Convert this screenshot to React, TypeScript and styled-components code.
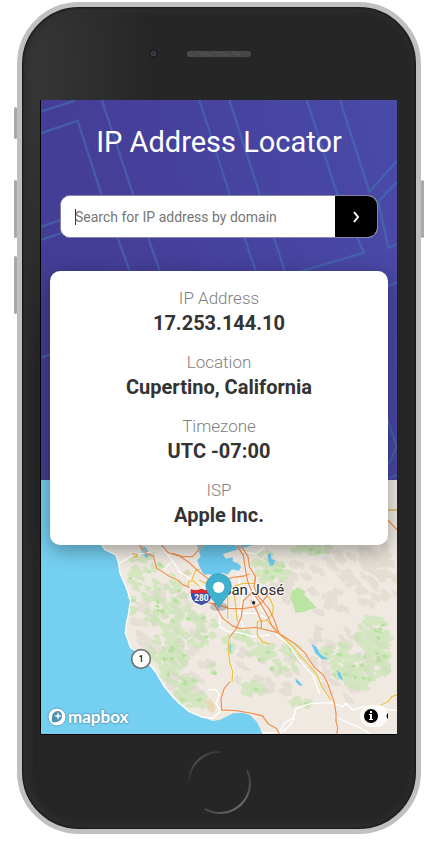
import React, { useState } from "react";
import styled, { createGlobalStyle } from "styled-components";

const GlobalStyle = createGlobalStyle`
  *, *::before, *::after { box-sizing: border-box; }
  body { margin: 0; background: #fff; font-family: Roboto, "Noto Sans", sans-serif; }
  h1, dl, dt, dd { margin: 0; }
`;

const Page = styled.div`
  padding: 2px 17px 10px;
`;

const Phone = styled.div`
  position: relative;
  border: 5px solid #c1c0c1;
  border-radius: 62px;
  background: radial-gradient(130px 300px at 0 60px, #383838, #262626);
  box-shadow: inset 0 0 2px 1px #151515, inset 2px 0 8px 4px #303030;
`;

const SideButton = styled.span<{ $side: "left" | "right"; $top: number; $height: number }>`
  position: absolute;
  top: ${(p) => p.$top}px;
  ${(p) => p.$side}: -8px;
  width: 3px;
  height: ${(p) => p.$height}px;
  border-radius: 2px;
  background: #a9a9a9;
`;

const TopBezel = styled.div`
  display: grid;
  grid-template-columns: 1fr 64px 1fr;
  align-items: center;
  height: 93px;
`;

const Camera = styled.span`
  justify-self: end;
  width: 9px;
  height: 9px;
  margin-right: 29px;
  border-radius: 50%;
  border: 2px solid #1f1d28;
  background: radial-gradient(circle, #2a2932 20%, #55555f 80%);
`;

const Speaker = styled.span`
  height: 6px;
  border-radius: 3px;
  background: repeating-linear-gradient(45deg, #505050 0 1px, #434343 1px 2px);
`;

const Screen = styled.main`
  margin: 0 19px 0 18px;
  border-left: 1px solid #000;
  border-bottom: 1px solid #000;
`;

const BottomBezel = styled.div`
  display: flex;
  justify-content: center;
  align-items: center;
  height: 94px;
`;

const HomeButton = styled.svg`
  display: block;
  width: 64px;
  height: 64px;
`;

const Hero = styled.header`
  position: relative;
  z-index: 1;
  height: 380px;
  padding: 24px 9px 0;
  background: linear-gradient(75deg, #433c92 0%, #46409c 45%, #4a4aa9 100%);
`;

const Backdrop = styled.svg`
  position: absolute;
  inset: 0;
  width: 100%;
  height: 100%;
`;

const Title = styled.h1`
  position: relative;
  color: #fff;
  font-size: 29px;
  font-weight: 400;
  line-height: 36px;
  text-align: center;
`;

const SearchForm = styled.form`
  position: relative;
  display: flex;
  height: 43px;
  margin: 35px 10px 33px;
  border: 1px solid #8885a8;
  border-radius: 10px;
  overflow: hidden;
  background: #fff;
`;

const SearchInput = styled.input`
  flex: 1;
  min-width: 0;
  padding: 0 14px;
  border: 0;
  outline: 0;
  background: #fff;
  color: #333;
  font: 400 14px Roboto, sans-serif;
  &::placeholder { color: #757575; opacity: 1; }
  &:placeholder-shown {
    caret-color: transparent;
    background: linear-gradient(#333, #333) no-repeat 14px 50% / 1px 16px, #fff;
  }
`;

const SearchButton = styled.button`
  display: flex;
  align-items: center;
  justify-content: center;
  width: 42px;
  padding: 0;
  border: 0;
  background: #000;
  color: #fff;
  cursor: pointer;
`;

const Card = styled.dl`
  position: relative;
  display: flex;
  flex-direction: column;
  gap: 14px;
  padding: 15px 16px 17px;
  border-radius: 10px;
  background: #fff;
  box-shadow: 0 5px 20px rgba(0, 0, 0, 0.35);
  text-align: center;
`;

const Label = styled.dt`
  color: #808080;
  font-size: 17px;
  font-weight: 300;
  line-height: 24px;
`;

const Value = styled.dd`
  color: #333;
  font-size: 20px;
  font-weight: 700;
  line-height: 26px;
`;

const MapPanel = styled.section`
  position: relative;
  height: 254px;
  overflow: hidden;
  background: #75cff0;
`;

const MapLogo = styled.a`
  position: absolute;
  left: 6px;
  bottom: 7px;
  display: flex;
  align-items: center;
  gap: 1px;
  color: #fff;
  font: 700 17px/20px Lato, sans-serif;
  text-decoration: none;
  text-shadow: 1px 0 1px #5fa6c2, -1px 0 1px #5fa6c2, 0 1px 1px #5fa6c2, 0 -1px 1px #5fa6c2;
`;

const Attribution = styled.button`
  position: absolute;
  right: 9px;
  bottom: 7px;
  width: 28px;
  height: 22px;
  padding: 0;
  border: 0;
  border-radius: 11px;
  background: rgba(255, 255, 255, 0.75);
  cursor: pointer;
  svg { display: block; }
`;

const details = [
  { label: "IP Address", value: "17.253.144.10" },
  { label: "Location", value: "Cupertino, California" },
  { label: "Timezone", value: "UTC -07:00" },
  { label: "ISP", value: "Apple Inc." },
];

const streets = [
  "M123 65L225 32",
  "M123 130L233 92L305 315L390 545",
  "M305 30L400 315L480 545",
  "M598 30L690 315L768 545",
  "M688 30L780 315L855 545",
  "M920 30L1008 300L1092 488L900 545",
  "M1020 30L1108 305L1191 212",
  "M1191 275L1135 335L1165 473L1191 463",
  "M123 410L300 350",
  "M123 450L300 390",
  "M1150 592L1191 577",
  "M123 803L170 787",
  "M1160 980L1190 1070L1165 1125",
  "M1160 1167L1191 1155",
];

/* Clusters of vegetation and relief: centre, radii, number of patches. */
type Cluster = [number, number, number, number, number];

const woods: Cluster[] = [
  [330, 75, 50, 35, 16], [300, 115, 20, 35, 8], [390, 160, 75, 55, 24],
  [420, 225, 90, 45, 34], [480, 270, 65, 50, 24], [385, 320, 50, 45, 32],
  [410, 365, 45, 35, 26], [440, 435, 35, 40, 28], [470, 480, 35, 24, 18],
  [390, 400, 25, 25, 8], [620, 310, 60, 38, 18], [690, 345, 60, 30, 20],
  [770, 330, 35, 25, 8], [655, 450, 35, 22, 18], [790, 487, 28, 12, 8],
  [530, 388, 12, 16, 3], [900, 335, 50, 25, 18],
  [940, 385, 60, 45, 42], [1010, 285, 50, 55, 46], [1020, 350, 40, 65, 44],
  [970, 425, 45, 22, 20], [690, 75, 35, 50, 28], [735, 95, 22, 22, 12],
  [830, 27, 60, 14, 16], [288, 195, 3, 25, 3], [745, 390, 45, 15, 6],
];

const hills: Cluster[] = [
  [400, 250, 110, 110, 34], [450, 390, 80, 90, 24], [850, 120, 170, 100, 50],
  [1010, 100, 80, 110, 40], [920, 360, 140, 120, 36], [700, 400, 120, 80, 20],
];

function makePatches(clusters: Cluster[], size: number, slant: number, seedStart: number) {
  let seed = seedStart;
  const next = () => {
    seed = (seed * 16807) % 2147483647;
    return seed / 2147483647;
  };
  return clusters
    .map(([cx, cy, rx, ry, count]) =>
      Array.from({ length: count }, () => {
        const turn = next() * Math.PI * 2;
        const dist = Math.sqrt(next());
        const x = cx + Math.cos(turn) * rx * dist;
        const y = cy + Math.sin(turn) * ry * dist;
        const points = Array.from({ length: 8 }, (_, i) => {
          const a = (i / 8) * Math.PI * 2;
          const r = size * (0.5 + next() * 0.8);
          return `${Math.round(x + Math.cos(a) * r)} ${Math.round(y + Math.sin(a) * r * 0.75 + Math.cos(a) * r * slant)}`;
        });
        return `M${points.join("L")}Z`;
      }).join("")
    )
    .join("");
}

const woodPath = makePatches(woods, 14, 0.15, 811);
const lawnPath = makePatches(woods.map(([x, y, rx, ry, n]) => [x, y, rx, ry, Math.ceil(n / 10)] as Cluster), 8, 0.1, 97);
const hillPath = makePatches(hills, 17, 0.4, 4021);

const land =
  "M100 -180L150 -60L195 12L208 30L240 45L248 70L252 100L270 140L284 180L278 220L272 245L268 280L276 300L284 324L300 332L325 362L345 378L362 400L385 440L410 470L430 490L460 515L500 532L530 543L553 539L575 528L592 520L622 518L642 525L662 545L672 565L682 590L1100 590L1100 -180Z";

const bay =
  "M478 0L700 0L560 42L570 56L590 52L590 64L606 70L616 80L608 92L588 88L574 104L560 98L538 112L520 102L504 106L492 84L484 60L494 50Z";

const motorways = [
  "M308 12L330 40L352 48L362 84L398 108L425 120L440 134L460 142",
  "M374 12L396 38L430 48L460 68L490 96L516 116",
  "M502 12L470 50L440 50L410 40",
  "M516 188L535 192L560 235L590 258L612 266L660 262L700 272L725 278",
  "M583 -10L622 45L626 75L634 120L645 150L670 185L695 228L708 258L725 278L775 310L808 340L835 382L862 405L875 430L895 488L900 520L900 545L905 562L903 580",
  "M612 12L636 50L640 80L658 110L654 140L668 170L698 205L716 242L728 278",
  "M535 190L580 206L622 206L660 200L680 185L698 160",
  "M565 122L590 112L625 108L640 102",
  "M645 160L622 182L616 230L600 268L582 290",
  "M645 180L664 215L676 245L676 266",
  "M582 425L565 445L555 475L557 510L600 512L650 520L680 528L697 552L722 566L730 582",
];

const highways = [
  "M580 290L576 330L582 370L590 395L588 425",
  "M560 165L575 170L575 235",
  "M592 140L598 190L604 245",
  "M592 140L620 130L656 130L660 105",
  "M690 168L700 172L712 200L710 220L690 242L664 244L664 285L680 306L700 312",
  "M690 238L725 276L770 320L800 355L825 382L843 405L858 440L884 480",
  "M455 140L458 124L472 122L490 138",
  "M468 118L478 92L490 88",
  "M490 120L510 130L518 142",
  "M290 42L304 45L302 52L292 50",
  "M1034 495L1055 486L1068 470L1084 464",
];

const roads = [
  "M195 12L208 30L240 45L248 70L252 100L270 140L284 180L278 220L272 245L268 280L276 300L284 324L300 332L325 362L345 378L362 400L385 440L410 470L430 490L460 515L500 532L530 535L552 515",
  "M253 68L290 46L345 36", "M380 25L410 62L430 95L470 120L520 152", "M385 88L410 62",
  "M520 188L550 220L552 260L575 275L610 278L650 290L700 285",
  "M610 120L620 165L610 220L624 270", "M625 145L680 145L700 170", "M575 150L610 150L655 152",
  "M600 220L655 220L700 236", "M640 125L655 175L684 215", "M552 510L540 490L550 465L540 448L520 450",
  "M682 580L740 575L768 550L780 505L825 490L885 488L920 500L930 490L950 510L985 500L1030 505L1084 512",
  "M725 582L750 545L775 535", "M890 528L930 545L965 560L1000 580", "M720 283L760 315L790 360L830 405L850 460",
  "M620 35L660 42L685 20",
];

function MapDrawing() {
  return (
    <Backdrop viewBox="0 0 1068 762" preserveAspectRatio="xMidYMid slice" aria-hidden="true">
      <g transform="translate(-15 180)" fill="none" strokeLinecap="round" strokeLinejoin="round">
        <path d={land} fill="#efe9e1" />
        <path d={hillPath} fill="#e3dcd3" fillOpacity="0.5" />
        <path d={woodPath} fill="#cfe6bc" fillOpacity="0.9" />
        <path d={hillPath} fill="#c9c9b0" fillOpacity="0.12" />
        <path d={lawnPath} fill="#b0e096" fillOpacity="0.8" />
        <path d="M762 175L770 152L786 142L808 154L805 165L830 190L842 204L824 208L802 216L778 218L774 198Z" fill="#b9e4a2" />
        <path d="M435 100L455 88L468 102L448 110Z" fill="#ded8b6" />
        <path d="M508 482L525 476L540 505L532 520L515 510Z" fill="#ead9b5" />
        <path d={bay} fill="#6cc9ee" />
        <path d="M310 18L328 22L345 42L332 54L320 42Z" fill="#6cc9ee" />
        <path d="M695 42L704 40L707 58L718 60L712 76L703 79L697 62ZM826 311L842 322L852 342L877 358L858 358L838 340ZM902 390L914 400L922 424L908 412ZM778 414L800 435L792 438L780 427ZM580 310L586 316L582 340L578 330Z" fill="#6cc9ee" />
        <g stroke="#fff" strokeWidth="4">
          {roads.map((d) => <path key={d} d={d} />)}
        </g>
        <g stroke="#fff" strokeWidth="7" strokeOpacity="0.7">
          {[...highways, ...motorways].map((d) => <path key={d} d={d} />)}
        </g>
        <g stroke="#e9c045" strokeWidth="4">
          {highways.map((d) => <path key={d} d={d} />)}
        </g>
        <g stroke="#ef9153" strokeWidth="4">
          {motorways.map((d) => <path key={d} d={d} />)}
          <path d="M1040 -90L1084 -90" stroke="#d9b35c" />
          <path d="M1055 -60L1084 -30" />
        </g>

        <g fontFamily="Roboto, sans-serif" textAnchor="middle">
          <text x="652" y="165" fontSize="45" fill="#2b2b2b" stroke="#fff" strokeWidth="6" strokeOpacity="0.8" paintOrder="stroke">San José</text>
          <circle cx="653" cy="188" r="6" fill="#111" stroke="#fff" strokeWidth="2" />
          <path d="M465 148Q478 154 496 146Q514 154 526 148Q538 186 496 197Q454 186 465 148Z" fill="#3d50a8" stroke="#fff" strokeWidth="3" />
          <path d="M465 147Q478 154 496 146Q514 154 526 147L528 160H463Z" fill="#dc2b35" />
          <text x="496" y="183" fontSize="25" fontWeight="700" fill="#fff">280</text>
          <circle cx="315" cy="357" r="28" fill="#fff" stroke="#737373" strokeWidth="5" />
          <text x="315" y="366" fontSize="25" fontWeight="500" fill="#000">1</text>
        </g>

        <ellipse cx="549" cy="200" rx="27" ry="13" fill="#000" fillOpacity="0.2" />
        <path d="M548 204C537 182 510 163 510 139A38 38 0 0 1 586 139C586 163 559 182 548 204Z" fill="#3fb1ce" stroke="#3795ae" strokeWidth="2" />
        <circle cx="548" cy="142" r="17" fill="#fff" />
      </g>
    </Backdrop>
  );
}

export default function App() {
  const [query, setQuery] = useState("");
  return (
    <>
      <GlobalStyle />
      <Page>
        <Phone>
          <SideButton $side="left" $top={100} $height={32} />
          <SideButton $side="left" $top={173} $height={58} />
          <SideButton $side="left" $top={249} $height={58} />
          <SideButton $side="right" $top={173} $height={58} />
          <TopBezel>
            <Camera />
            <Speaker />
          </TopBezel>
          <Screen>
            <Hero>
              <Backdrop viewBox="0 0 1068 1140" preserveAspectRatio="xMidYMid slice" aria-hidden="true">
                <g transform="translate(-123 -30)" fill="none" stroke="#4377b5" strokeOpacity="0.55" strokeWidth="7">
                  {streets.map((d) => <path key={d} d={d} />)}
                </g>
              </Backdrop>
              <Title>IP Address Locator</Title>
              <SearchForm onSubmit={(e) => e.preventDefault()}>
                <SearchInput
                  type="text"
                  aria-label="Search for IP address by domain"
                  placeholder="Search for IP address by domain"
                  value={query}
                  onChange={(e) => setQuery(e.target.value)}
                />
                <SearchButton type="submit" aria-label="Search">
                  <svg width="8" height="12" viewBox="0 0 8 12" fill="none" stroke="currentColor" strokeWidth="2">
                    <path d="M2 1L6 6L2 11" />
                  </svg>
                </SearchButton>
              </SearchForm>
              <Card>
                {details.map((item) => (
                  <div key={item.label}>
                    <Label>{item.label}</Label>
                    <Value>{item.value}</Value>
                  </div>
                ))}
              </Card>
            </Hero>
            <MapPanel aria-label="Map">
              <MapDrawing />
              <MapLogo href="#mapbox">
                <svg width="20" height="20" viewBox="0 0 20 20" aria-hidden="true">
                  <circle cx="10" cy="10" r="9" fill="#fff" stroke="#5fa6c2" strokeWidth="1" />
                  <path d="M5 15C4 9 6 4 11 4A5 5 0 0 1 15 9C15 14 10 16 5 15Z" fill="#4b91ad" />
                  <path d="M11 5L12 8L15 9L12 10L11 13L10 10L7 9L10 8Z" fill="#fff" />
                </svg>
                mapbox
              </MapLogo>
              <Attribution type="button" aria-label="Toggle attribution">
                <svg width="28" height="22" viewBox="0 0 28 22">
                  <circle cx="11" cy="11" r="7" fill="#000" />
                  <path d="M10 6H12V8H10ZM9 9H12V14H13V15H9V14H10V10H9Z" fill="#fff" />
                  <path d="M28 8Q25 11 28 14Z" fill="#000" />
                </svg>
              </Attribution>
            </MapPanel>
          </Screen>
          <BottomBezel>
            <HomeButton viewBox="0 0 64 64" fill="none" aria-hidden="true">
              <defs>
                <linearGradient id="arcLeft" x1="0" y1="1" x2="1" y2="0">
                  <stop offset="0" stopColor="#2c2c2c" />
                  <stop offset="0.5" stopColor="#505050" />
                  <stop offset="1" stopColor="#333" />
                </linearGradient>
                <linearGradient id="arcRight" x1="1" y1="0" x2="0" y2="1">
                  <stop offset="0" stopColor="#3c3c3c" />
                  <stop offset="0.5" stopColor="#707070" />
                  <stop offset="1" stopColor="#4a4a4a" />
                </linearGradient>
              </defs>
              <path d="M2 32A30 30 0 0 1 34 2" stroke="url(#arcLeft)" strokeWidth="2" />
              <path d="M60 20A30 30 0 0 1 18 59" stroke="url(#arcRight)" strokeWidth="2" />
            </HomeButton>
          </BottomBezel>
        </Phone>
      </Page>
    </>
  );
}
